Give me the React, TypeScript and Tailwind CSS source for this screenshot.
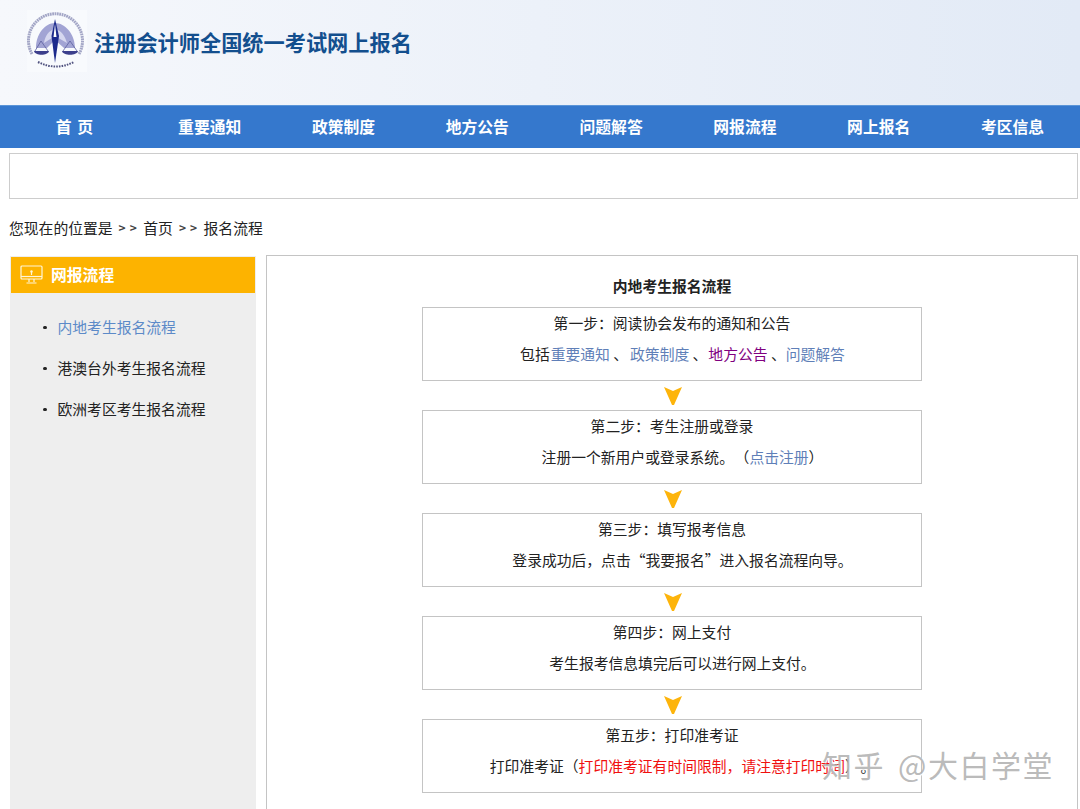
const cjk = { fontFamily: '"Noto Sans CJK SC", "Liberation Sans", sans-serif' };

const navItems = ["首 页", "重要通知", "政策制度", "地方公告", "问题解答", "网报流程", "网上报名", "考区信息"];

const sideItems = [
  { label: "内地考生报名流程", active: true },
  { label: "港澳台外考生报名流程", active: false },
  { label: "欧洲考区考生报名流程", active: false },
];

function Logo() {
  return (
    <svg viewBox="0 0 60 62" className="h-[62px] w-[60px] shrink-0 bg-[#f8fafd] blur-[0.4px]">
      {/* outer ring of tiny lettering */}
      <path d="M5 44 A27 27 0 1 1 52 44" fill="none" stroke="#a3a6c6" strokeWidth="3" strokeDasharray="1.8 0.6" />
      {/* dome */}
      <path d="M9 38 C9 24 18 13 28 13 C38 13 48 24 48 38 L37 38 L28 30 L20 38 Z" fill="#a2a4d4" />
      <path d="M17 33 C18 26 22 20 28 19 C34 20 38 26 40 33 L28 26 Z" fill="#d6d7ef" />
      {/* balance */}
      <path d="M14 31 L8 41 M14 31 L21 41 M43 31 L36 41 M43 31 L50 41" stroke="#5c5f9e" strokeWidth="0.8" fill="none" />
      <path d="M7 41 H22 C21 46 8 46 7 41 Z" fill="#3c3f8c" />
      <path d="M35 41 H51 C50 46 36 46 35 41 Z" fill="#3c3f8c" />
      {/* compass needle */}
      <path d="M28 9 L32 26 L28 53 L24.5 26 Z" fill="#1c2a8c" />
      <path d="M28 14 L29.5 27 L26.5 27 Z" fill="#ffffff" />
      {/* bottom seal lettering */}
      <path d="M11 52 Q29 61 47 52" fill="none" stroke="#50527f" strokeWidth="2" strokeDasharray="1.6 1.1" />
    </svg>
  );
}

function MonitorIcon() {
  return (
    <svg viewBox="0 0 24 20" className="h-5 w-6 shrink-0" fill="none" stroke="#fff5d8" strokeWidth="1.2">
      <rect x="1" y="1" width="21" height="13" rx="1" />
      <circle cx="11.5" cy="6.5" r="1.2" fill="#fff5d8" stroke="none" />
      <path d="M11.5 7 V10" />
      <path d="M1 11.5 H22" />
      <path d="M9 14 V17 M14 14 V17 M6.5 18 H16.5" />
    </svg>
  );
}

function Arrow() {
  return (
    <div className="flex h-[29px] items-center justify-center pl-[2px]">
      <svg viewBox="0 0 18 20" className="h-5 w-[18px]">
        <path d="M0 1 L9 5 L18 1 L10 19 L8 19 Z" fill="#fdb40b" />
      </svg>
    </div>
  );
}

function Step({ title, children }: { title: string; children: React.ReactNode }) {
  return (
    <div className="flex h-[74px] w-[500px] shrink-0 flex-col items-center border border-[#c4c4c4] bg-white pt-[4px] text-[14.8px] leading-[22px] text-[#222]">
      <p>{title}</p>
      <p className="mt-[9px] pl-[21px]">{children}</p>
    </div>
  );
}

function Crumb() {
  return <b className="ml-[6px] mr-[2.5px] text-[12px] font-bold tracking-[4px] text-[#444]">&gt;&gt;</b>;
}

export default function App() {
  return (
    <div className="relative h-[809px] w-[1080px] overflow-hidden bg-white" style={cjk}>
      <header className="flex h-[105px] items-start bg-gradient-to-r from-[#f6f8fc] to-[#e2eaf6] pl-[27px] pt-[10px]">
        <Logo />
        <h1 className="ml-[7px] mt-[17px] text-[21.2px] font-bold leading-[30px] text-[#134f8e]">
          注册会计师全国统一考试网上报名
        </h1>
      </header>

      <nav className="flex h-[43px] items-center border-t border-[#5b95d8] bg-[#3578cd] pl-[9px]">
        {navItems.map((item, i) => (
          <a
            key={item}
            className={
              i === 0
                ? "w-[133.8px] pr-[2px] text-center text-[15.8px] font-bold tracking-[1px] text-white"
                : "w-[133.8px] text-center text-[15.8px] font-bold text-white"
            }
          >
            {item}
          </a>
        ))}
      </nav>

      <div className="ml-[9px] mr-[2px] mt-[5px] h-[46px] border border-[#cdcdcd] bg-white" />

      <div className="ml-[9px] mt-[18px] flex h-[22px] items-center text-[14.8px] text-[#222]">
        <span>您现在的位置是</span>
        <Crumb />
        <span>首页</span>
        <Crumb />
        <span>报名流程</span>
      </div>

      <div className="ml-[10px] mr-[2px] mt-[16px] flex items-start gap-[10px]">
        <aside className="mt-px h-[559px] w-[246px] shrink-0 bg-[#eeeeee] px-px pt-px">
          <div className="flex h-[36px] items-center gap-[7px] bg-[#fdb300] pl-[9px] text-[15.8px] font-bold text-white">
            <MonitorIcon />
            <span>网报流程</span>
          </div>
          <ul className="mt-[14px] pl-[32px] text-[14.8px] text-[#222]">
            {sideItems.map((item) => (
              <li key={item.label} className="flex h-[41px] items-center">
                <span className="mr-[11px] h-[3.5px] w-[3.5px] rounded-full bg-[#222]" />
                <a className={item.active ? "text-[#5c8ac8]" : ""}>{item.label}</a>
              </li>
            ))}
          </ul>
        </aside>

        <main className="flex h-[560px] flex-1 flex-col items-center border border-[#c4c4c4] pt-[19px]">
          <h2 className="h-[32px] text-[14.8px] font-bold leading-[22px] text-[#222]">内地考生报名流程</h2>
          <Step title="第一步：阅读协会发布的通知和公告">
            包括<a className="ml-px text-[#5f7fb8]">重要通知</a> 、<a className="ml-[2px] text-[#5f7fb8]">政策制度</a> 、
            <a className="ml-px text-[#800080]">地方公告</a> 、<a className="text-[#5f7fb8]">问题解答</a>
          </Step>
          <Arrow />
          <Step title="第二步：考生注册或登录">
            注册一个新用户或登录系统。<span className="ml-[8px]">（</span>
            <a className="text-[#5f7fb8]">点击注册</a>）
          </Step>
          <Arrow />
          <Step title="第三步：填写报考信息">登录成功后，点击“我要报名”进入报名流程向导。</Step>
          <Arrow />
          <Step title="第四步：网上支付">考生报考信息填完后可以进行网上支付。</Step>
          <Arrow />
          <Step title="第五步：打印准考证">
            打印准考证（<span className="text-[#f01010]">打印准考证有时间限制，请注意打印时间</span>）
            <span className="ml-[8px]">。</span>
          </Step>
        </main>
      </div>

      {/* 水印 */}
      <div className="absolute left-[822px] top-[743px] flex text-[30px] leading-[42px] tracking-[1.5px] text-[#a8a8a8]/80 [text-shadow:1px_1px_1px_#fff]">
        <span>知乎</span>
        <span className="ml-[13px]">@大白学堂</span>
      </div>
    </div>
  );
}
